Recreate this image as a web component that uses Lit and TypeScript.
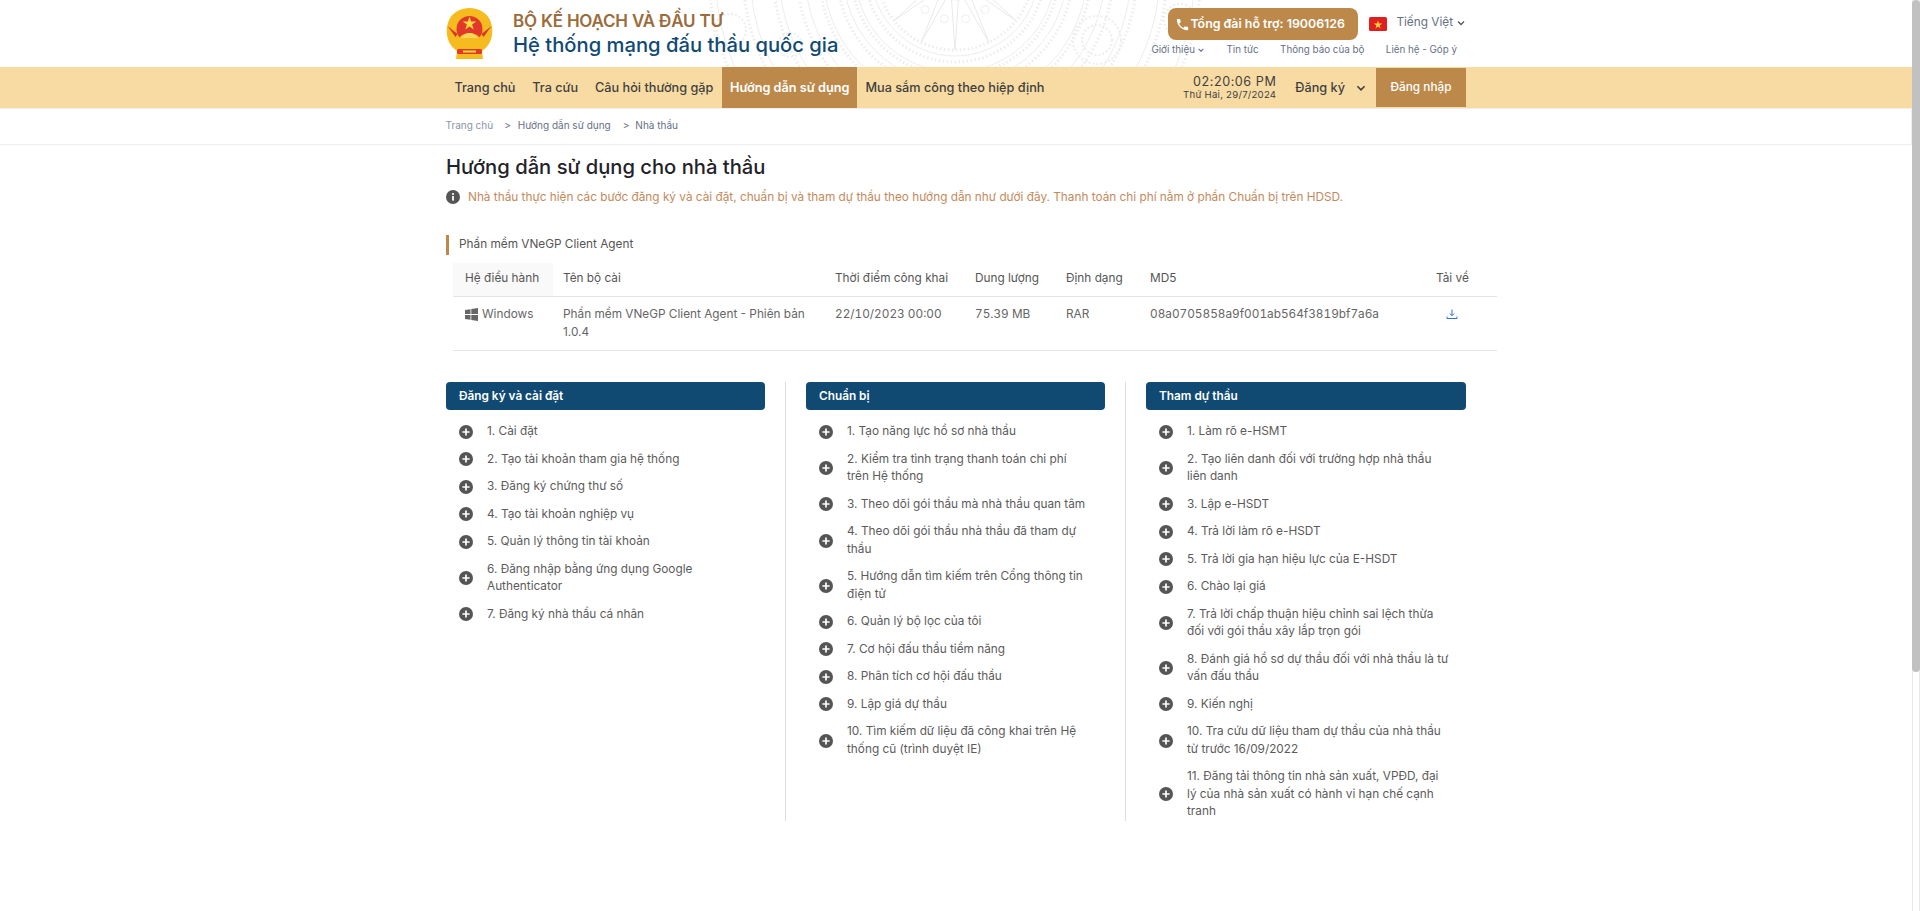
import { LitElement, html, css, svg } from "lit";
import { customElement } from "lit/decorators.js";

const col1 = [
  "1. Cài đặt",
  "2. Tạo tài khoản tham gia hệ thống",
  "3. Đăng ký chứng thư số",
  "4. Tạo tài khoản nghiệp vụ",
  "5. Quản lý thông tin tài khoản",
  "6. Đăng nhập bằng ứng dụng Google Authenticator",
  "7. Đăng ký nhà thầu cá nhân",
];
const col2 = [
  "1. Tạo năng lực hồ sơ nhà thầu",
  "2. Kiểm tra tình trạng thanh toán chi phí trên Hệ thống",
  "3. Theo dõi gói thầu mà nhà thầu quan tâm",
  "4. Theo dõi gói thầu nhà thầu đã tham dự thầu",
  "5. Hướng dẫn tìm kiếm trên Cổng thông tin điện tử",
  "6. Quản lý bộ lọc của tôi",
  "7. Cơ hội đấu thầu tiềm năng",
  "8. Phân tích cơ hội đấu thầu",
  "9. Lập giá dự thầu",
  "10. Tìm kiếm dữ liệu đã công khai trên Hệ thống cũ (trình duyệt IE)",
];
const col3 = [
  "1. Làm rõ e-HSMT",
  "2. Tạo liên danh đối với trường hợp nhà thầu liên danh",
  "3. Lập e-HSDT",
  "4. Trả lời làm rõ e-HSDT",
  "5. Trả lời gia hạn hiệu lực của E-HSDT",
  "6. Chào lại giá",
  "7. Trả lời chấp thuận hiệu chỉnh sai lệch thừa đối với gói thầu xây lắp trọn gói",
  "8. Đánh giá hồ sơ dự thầu đối với nhà thầu là tư vấn đấu thầu",
  "9. Kiến nghị",
  "10. Tra cứu dữ liệu tham dự thầu của nhà thầu từ trước 16/09/2022",
  "11. Đăng tải thông tin nhà sản xuất, VPĐD, đại lý của nhà sản xuất có hành vi hạn chế cạnh tranh",
];

const chevron = (s: number, c = "#555") => html`<svg width=${s} height=${s} viewBox="0 0 10 10" fill="none" stroke=${c} stroke-width="1.3"><path d="M2 3.5 5 6.5 8 3.5"/></svg>`;

const plus = html`<svg class="plus" width="14" height="14" viewBox="0 0 14 14"><circle cx="7" cy="7" r="7" fill="#555"/><path d="M7 3.4v7.2M3.4 7h7.2" stroke="#fff" stroke-width="1.7"/></svg>`;

function drum() {
  const cx = 955, cy = -28;
  const rays = [];
  for (let i = 0; i < 14; i++) {
    const a = (i * Math.PI * 2) / 14 + Math.PI / 14;
    const w = Math.PI / 14;
    const p = (r: number, t: number) => `${cx + r * Math.cos(t)},${cy + r * Math.sin(t)}`;
    rays.push(svg`<polygon points="${p(78, a)} ${p(28, a - w * 0.55)} ${p(28, a + w * 0.55)}" fill="none" stroke="#e9e9e9" stroke-width="1"/>`);
    rays.push(svg`<circle cx=${cx + 48 * Math.cos(a + w)} cy=${cy + 48 * Math.sin(a + w)} r="4" fill="none" stroke="#efefef"/>`);
  }
  const rings = [78, 84, 90, 100, 104, 112, 118, 132, 136, 150, 158, 176, 182, 205, 212, 240, 246].map((r, i) =>
    svg`<circle cx=${cx} cy=${cy} r=${r} fill="none" stroke="#ededed" stroke-width=${i % 2 ? 1 : 3} stroke-dasharray=${i % 2 ? "none" : "1.5 2.5"}/>`);
  return svg`${rays}${rings}
    <g fill="none" stroke="#eee" stroke-width="2" stroke-dasharray="2 2">
      <circle cx="1097" cy="40" r="24"/><circle cx="1097" cy="40" r="15"/><circle cx="1180" cy="20" r="16"/>
      <circle cx="730" cy="30" r="16"/><circle cx="790" cy="45" r="12"/>
    </g>`;
}

@customElement("app-root")
export class AppRoot extends LitElement {
  static styles = css`
    :host { display: flex; height: 911px; overflow: hidden; background: #fff; font-family: Inter, "Noto Sans", sans-serif; font-size: 11.8px; line-height: 17.5px; color: #555; }
    .page { flex: 1; min-width: 0; }
    .scroll { width: 8px; box-sizing: border-box; border-left: 1px solid #e8e8e8; border-right: 1px solid #e8e8e8; position: relative; }
    .thumb { position: absolute; left: -1px; right: -1px; top: 0; height: 672px; background: #c1c1c1; border-radius: 4px; }
    .wrap { width: 1020px; margin: 0 auto; box-sizing: border-box; }

    .top { height: 67px; position: relative; overflow: hidden; }
    .bg { position: absolute; left: 0; top: 0; }
    .top .wrap { position: relative; height: 67px; display: flex; justify-content: space-between; }
    .brand { display: flex; align-items: flex-start; gap: 20px; padding-top: 8px; }
    .brand-t { padding-top: 0.5px; }
    .b1 { font-size: 17px; line-height: 24px; font-weight: 600; color: #9b6c3c; letter-spacing: -0.2px; }
    .b2 { font-size: 20.2px; line-height: 26px; font-weight: 500; color: #104a72; margin-top: -0.5px; }
    .tr { display: flex; flex-direction: column; align-items: flex-end; }
    .tr1 { display: flex; align-items: center; padding-top: 8px; height: 32px; }
    .phone { display: flex; align-items: center; gap: 0; height: 32px; width: 190px; box-sizing: border-box; padding-left: 7px; border-radius: 8px; background: #bc894b; color: #fff; font-size: 12.4px; font-weight: 600; margin-right: 11px; white-space: nowrap; }
    .flag { margin-right: 9px; display: block; }
    .lang { font-size: 11.8px; color: #667085; display: flex; align-items: center; gap: 3px; margin-top: -2px; }
    .tr2 { display: flex; gap: 21.5px; font-size: 9.8px; line-height: 14px; color: #667085; margin-top: 3px; margin-right: 9px; }
    .tr2 span { display: flex; align-items: center; gap: 2px; }

    .nav { height: 42px; background: #f8dba3; border-bottom: 1px solid #eee; box-sizing: border-box; }
    .nav .wrap { display: flex; align-items: stretch; height: 41px; }
    .nav a { display: flex; align-items: center; padding: 0 8.4px; font-size: 12.7px; font-weight: 500; color: #3f3f3f; }
    .nav a.on { background: #bc894b; color: #fff; font-weight: 600; padding: 0 7.6px; margin-left: 0.6px; }
    .sp { flex: 1; }
    .clock { text-align: right; align-self: center; margin-right: 19px; color: #3f3f3f; }
    .clock b { display: block; font-weight: 400; font-size: 12.6px; line-height: 14px; letter-spacing: 0.55px; }
    .clock i { display: block; font-style: normal; font-size: 9.6px; line-height: 12px; letter-spacing: 0.25px; }
    .reg { display: flex; align-items: center; gap: 10px; font-size: 12.7px; font-weight: 500; color: #3f3f3f; margin-right: 9px; }
    .login { width: 90px; margin: 1px 0 1px; display: flex; align-items: center; justify-content: center; background: #bc894b; color: #fff; font-size: 11.8px; font-weight: 500; }

    .crumb { height: 36px; box-sizing: border-box; border-bottom: 1px solid #eee; border-right: 1px solid #eee; }
    .crumb .wrap { display: flex; align-items: center; height: 34px; font-size: 10px; color: #667085; }
    .crumb .first { color: #8a94a6; }
    .crumb .sep { margin: 0 7px 0 11px; }
    .crumb .sep2 { margin: 0 6px 0 12px; }

    h1 { margin: 8px 0 0; font-size: 20.2px; line-height: 28px; font-weight: 500; color: #1f2329; }
    .note { display: flex; align-items: center; gap: 8px; margin-top: 7.5px; color: #c48a5c; }
    .sec { margin-top: 28.5px; height: 20px; box-sizing: border-box; padding: 0.5px 0 0 10px; border-left: 3px solid #bc894b; display: flex; align-items: center; color: #555; }
    table { border-collapse: collapse; table-layout: fixed; width: 1044px; margin: 8px 0 0 7px; }
    th { font-weight: 400; text-align: left; height: 34px; padding: 0 10px 1px; border-bottom: 1px solid #e4e4e4; color: #555; box-sizing: border-box; }
    th:first-child { background: #f9f9f9; padding-left: 12px; }
    td { vertical-align: top; padding: 9px 10px 9px; border-bottom: 1px solid #e4e4e4; color: #666; }
    td:first-child { padding-left: 12px; }
    td.num { font-feature-settings: "tnum"; }
    .win { display: flex; align-items: center; gap: 4px; }
    .dl { display: block; margin: 2px 0 0 10px; }

    .cols { display: grid; grid-template-columns: 319px 1px 299px 1px 320px; gap: 20px; margin-top: 31px; height: 436px; }
    .rule { background: #ddd; }
    .head { height: 28px; box-sizing: border-box; padding: 1.5px 0 0 13px; border-radius: 4px; background: #104a72; color: #fff; font-weight: 600; display: flex; align-items: center; }
    ul { list-style: none; margin: 0; padding: 13px 16.5px 0 13px; display: flex; flex-direction: column; gap: 10px; }
    li { display: flex; align-items: center; gap: 14px; color: #5b5b5b; }
    .plus { flex: none; }
  `;

  list(title: string, items: string[]) {
    return html`<div>
      <div class="head">${title}</div>
      <ul>${items.map((t) => html`<li>${plus}<span>${t}</span></li>`)}</ul>
    </div>`;
  }

  render() {
    return html`
      <div class="page">
        <div class="top">
          <svg class="bg" width="1912" height="67">${drum()}</svg>
          <div class="wrap">
            <div class="brand">
              <svg width="47" height="51" viewBox="0 0 47 51">
                <path d="M23.5 0C33 0 41 5 44 12c3 7 3 15 0 22-2 4-5 7-8 9l1 8H10l1-8c-3-2-6-5-8-9C0 27 0 19 3 12 6 5 14 0 23.5 0z" fill="#f6bb1e"/>
                <circle cx="23.5" cy="21" r="13" fill="#e0392b"/>
                <path d="M23.5 8.500l1.600 5h5.200l-4.200 3 1.600 5-4.200-3.100-4.200 3.100 1.600-5-4.200-3h5.200z" fill="#ffd83a"/>
                <path d="M11 33c3-6 8-8 12.500-8s9.500 2 12.500 8v6H11z" fill="#f6bb1e"/>
                <path d="M15 30c2-3 5-5 8.500-5s6.500 2 8.500 5z" fill="#f9d65a"/>
                <path d="M1.500 18l10 8-2 3zM45.500 18l-10 8 2 3z" fill="#d9362a"/>
                <rect x="11" y="41" width="25" height="5" rx="1.500" fill="#e0392b"/>
                <rect x="17" y="42.500" width="13" height="2" fill="#ffd83a"/>
              </svg>
              <div class="brand-t">
                <div class="b1">BỘ KẾ HOẠCH VÀ ĐẦU TƯ</div>
                <div class="b2">Hệ thống mạng đấu thầu quốc gia</div>
              </div>
            </div>
            <div class="tr">
              <div class="tr1">
                <div class="phone">
                  <svg width="15" height="15" viewBox="0 0 24 24" fill="#fff"><path d="M6.600 10.800c1.400 2.800 3.800 5.100 6.600 6.600l2.200-2.200c.3-.3.700-.4 1-.2 1.100.4 2.300.6 3.600.6.600 0 1 .4 1 1V20c0 .6-.4 1-1 1C10.600 21 3 13.400 3 4c0-.6.400-1 1-1h3.500c.6 0 1 .4 1 1 0 1.300.2 2.500.6 3.600.1.300 0 .7-.2 1z"/></svg>
                  <span>Tổng đài hỗ trợ: 19006126</span>
                </div>
                <svg class="flag" width="18" height="14" viewBox="0 0 18 14"><rect width="18" height="14" rx="1.500" fill="#e0201f"/><path d="M9 3.500l1 3h3.100l-2.500 1.900.9 3L9 9.500l-2.500 1.900.9-3L4.900 6.500H8z" fill="#ffd83a"/></svg>
                <div class="lang">Tiếng Việt ${chevron(10)}</div>
              </div>
              <div class="tr2">
                <span>Giới thiệu ${chevron(8, "#667085")}</span>
                <span>Tin tức</span>
                <span>Thông báo của bộ</span>
                <span>Liên hệ - Góp ý</span>
              </div>
            </div>
          </div>
        </div>

        <div class="nav">
          <div class="wrap">
            <a>Trang chủ</a><a>Tra cứu</a><a>Câu hỏi thường gặp</a><a class="on">Hướng dẫn sử dụng</a><a>Mua sắm công theo hiệp định</a>
            <div class="sp"></div>
            <div class="clock"><b>02:20:06 PM</b><i>Thứ Hai, 29/7/2024</i></div>
            <div class="reg">Đăng ký ${chevron(12, "#3f3f3f")}</div>
            <div class="login">Đăng nhập</div>
          </div>
        </div>

        <div class="crumb">
          <div class="wrap">
            <span class="first">Trang chủ</span><span class="sep">&gt;</span><span>Hướng dẫn sử dụng</span><span class="sep2">&gt;</span><span>Nhà thầu</span>
          </div>
        </div>

        <div class="wrap">
          <h1>Hướng dẫn sử dụng cho nhà thầu</h1>
          <div class="note">
            <svg width="14" height="14" viewBox="0 0 14 14"><circle cx="7" cy="7" r="7" fill="#555"/><rect x="6.100" y="6" width="1.800" height="4.600" fill="#fff"/><circle cx="7" cy="4" r="1.100" fill="#fff"/></svg>
            <span>Nhà thầu thực hiện các bước đăng ký và cài đặt, chuẩn bị và tham dự thầu theo hướng dẫn như dưới đây. Thanh toán chi phí nằm ở phần Chuẩn bị trên HDSD.</span>
          </div>
          <div class="sec">Phần mềm VNeGP Client Agent</div>
          <table>
            <colgroup><col style="width:100px"/><col style="width:272px"/><col style="width:140px"/><col style="width:91px"/><col style="width:84px"/><col style="width:286px"/><col style="width:71px"/></colgroup>
            <tr><th>Hệ điều hành</th><th>Tên bộ cài</th><th>Thời điểm công khai</th><th>Dung lượng</th><th>Định dạng</th><th>MD5</th><th>Tải về</th></tr>
            <tr>
              <td><span class="win"><svg width="13" height="13" viewBox="0 0 13 13" fill="#666"><path d="M0 2l5.500-.8v4.900H0zM6.300 1.100L13 0v6.100H6.300zM0 6.900h5.500v4.900L0 11zM6.300 6.900H13V13l-6.700-1z"/></svg>Windows</span></td>
              <td>Phần mềm VNeGP Client Agent - Phiên bản 1.0.4</td>
              <td class="num">22/10/2023 00:00</td>
              <td class="num">75.39 MB</td>
              <td>RAR</td>
              <td class="num">08a0705858a9f001ab564f3819bf7a6a</td>
              <td><svg class="dl" width="12" height="12" viewBox="0 0 12 12" fill="none" stroke="#2f6fd6" stroke-width="1"><path d="M6 1.500v6M3.800 5.500 6 7.700l2.200-2.200M1 8.500v2h10v-2"/></svg></td>
            </tr>
          </table>
          <div class="cols">
            ${this.list("Đăng ký và cài đặt", col1)}
            <div class="rule"></div>
            ${this.list("Chuẩn bị", col2)}
            <div class="rule"></div>
            ${this.list("Tham dự thầu", col3)}
          </div>
        </div>
      </div>
      <div class="scroll"><div class="thumb"></div></div>
    `;
  }
}
